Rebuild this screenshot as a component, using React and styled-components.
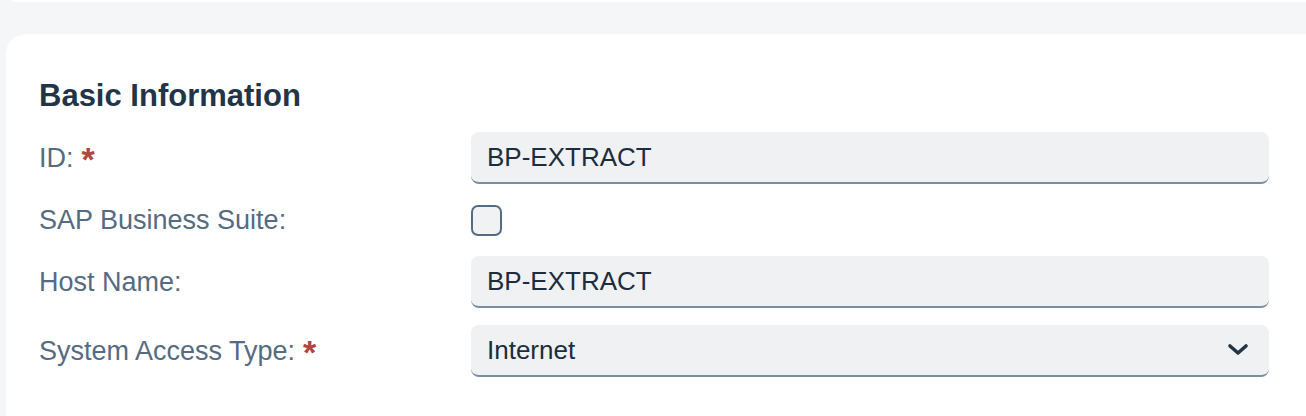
import React from 'react';
import styled, { createGlobalStyle } from 'styled-components';

const GlobalStyle = createGlobalStyle`
  html, body {
    margin: 0;
    padding: 0;
    background: #f5f6f7;
    font-family: "Liberation Sans", Arial, sans-serif;
  }
`;

const Page = styled.div`
  width: 1306px;
  height: 416px;
  overflow: hidden;
  padding-left: 6px;
  box-sizing: border-box;
  display: flex;
  flex-direction: column;
  gap: 32px;
`;

const PrevCard = styled.div`
  margin-top: -20px;
  height: 22px;
  width: 1340px;
  background: #ffffff;
  border-radius: 20px;
  flex-shrink: 0;
`;

const Card = styled.section`
  width: 1340px;
  background: #ffffff;
  border-radius: 20px;
  padding: 42px 33px 80px;
  box-sizing: border-box;
  flex-shrink: 0;
`;

const Heading = styled.h2`
  margin: 0 0 16px;
  font-size: 31px;
  line-height: 40px;
  font-weight: 700;
  color: #223548;
`;

const Form = styled.div`
  display: grid;
  grid-template-columns: 432px 798px;
  row-gap: 17px;
  align-items: center;
`;

const Label = styled.label`
  display: flex;
  align-items: center;
  gap: 8px;
  font-size: 27px;
  color: #556b82;
  height: ${p => p.$h || 52}px;
`;

const Star = styled.span`
  color: #b04640;
  font-weight: 700;
  font-size: 34px;
  line-height: 1;
  margin-top: 2px;
`;

const Field = styled.div`
  height: 52px;
  box-sizing: border-box;
  background: #eff1f2;
  border-radius: 8px;
  border-bottom: 2px solid #7a8da3;
  padding: 0 16px;
  display: flex;
  align-items: center;
  justify-content: space-between;
  font-size: 26px;
  color: #1d2d3e;
`;

const CheckRow = styled.div`
  height: 38px;
  display: flex;
  align-items: center;
`;

const Checkbox = styled.span`
  width: 31px;
  height: 31px;
  box-sizing: border-box;
  border: 2px solid #556b82;
  border-radius: 7px;
  background: #f0f2f4;
`;

const Chevron = () => (
  <svg width="22" height="14" viewBox="0 0 22 14" style={{ marginRight: 4 }}>
    <path d="M3 3 L11 10 L19 3" fill="none" stroke="#223548" strokeWidth="3.6" strokeLinecap="round" strokeLinejoin="round" />
  </svg>
);

export default function App() {
  return (
    <Page>
      <GlobalStyle />
      <PrevCard />
      <Card>
        <Heading>Basic Information</Heading>
        <Form>
          <Label>
            ID: <Star>*</Star>
          </Label>
          <Field>BP-EXTRACT</Field>

          <Label $h={38}>SAP Business Suite:</Label>
          <CheckRow>
            <Checkbox />
          </CheckRow>

          <Label>Host Name:</Label>
          <Field>BP-EXTRACT</Field>

          <Label>
            System Access Type: <Star>*</Star>
          </Label>
          <Field>
            Internet
            <Chevron />
          </Field>
        </Form>
      </Card>
    </Page>
  );
}
